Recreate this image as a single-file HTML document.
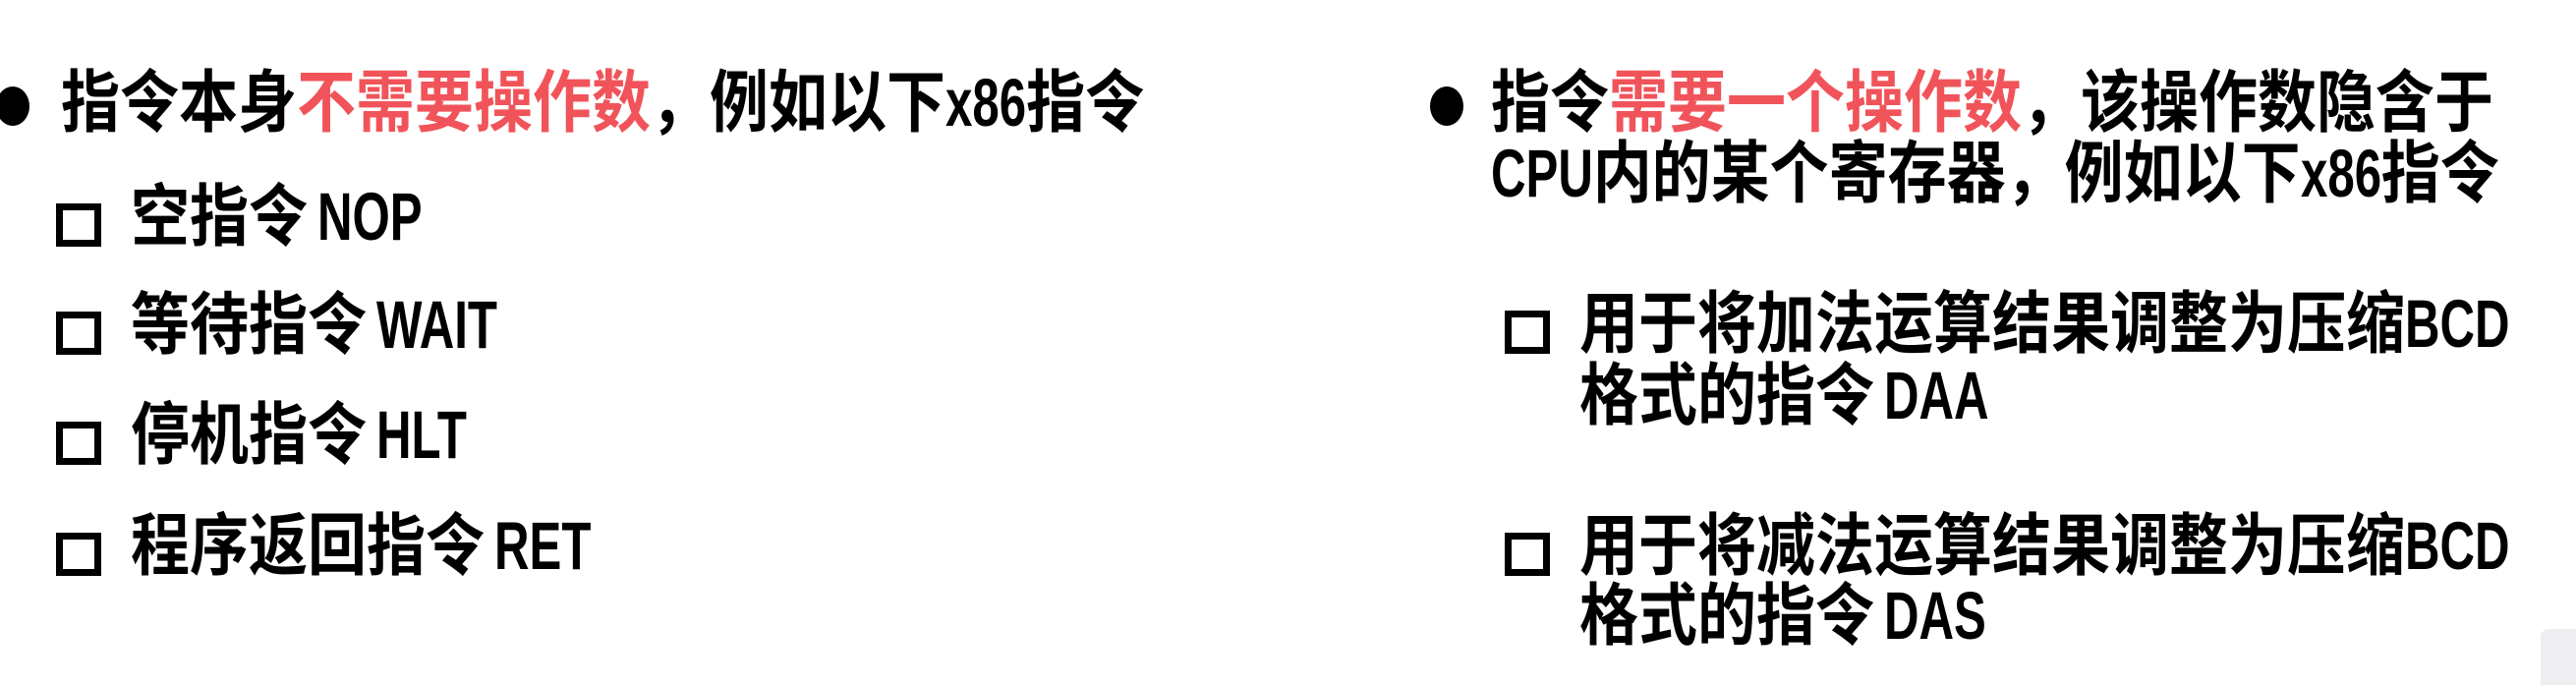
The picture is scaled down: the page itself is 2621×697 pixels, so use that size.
<!DOCTYPE html>
<html><head><meta charset="utf-8"><style>
html,body{margin:0;padding:0;background:#fff;}
body{width:2621px;height:697px;position:relative;overflow:hidden;}
.t{position:absolute;white-space:nowrap;font-family:"Liberation Sans","Noto Sans CJK SC",sans-serif;font-weight:bold;font-size:60px;line-height:72px;color:#000;transform:scaleY(1.15);transform-origin:0 62px;}
.r{color:#f0545a;}
.l{display:inline-block;transform:scaleX(.82);transform-origin:0 0;}
.dot{position:absolute;width:34px;height:40px;border-radius:50%;background:#000;}
.box{position:absolute;width:32px;height:30px;border:7px solid #000;box-sizing:content-box;}
</style></head><body>
<div class="dot" style="left:-4px;top:88px;"></div>
<div class="t" style="left:62px;top:73px;">指令本身<span class="r">不需要操作数</span>，例如以下<span class="l" style="margin-right:-18px">x86</span>指令</div>

<div class="box" style="left:57px;top:207px;"></div>
<div class="t" style="left:133px;top:189px;">空指令<span class="l" style="margin-left:10px;margin-right:-23px">NOP</span></div>
<div class="box" style="left:57px;top:317px;"></div>
<div class="t" style="left:133px;top:299px;">等待指令<span class="l" style="margin-left:10px;margin-right:-27px">WAIT</span></div>
<div class="box" style="left:57px;top:429px;"></div>
<div class="t" style="left:133px;top:411px;">停机指令<span class="l" style="margin-left:10px;margin-right:-21px">HLT</span></div>
<div class="box" style="left:57px;top:542px;"></div>
<div class="t" style="left:133px;top:524px;">程序返回指令<span class="l" style="margin-left:10px;margin-right:-22px">RET</span></div>

<div class="dot" style="left:1455px;top:88px;"></div>
<div class="t" style="left:1517px;top:73px;">指令<span class="r">需要一个操作数</span>，该操作数隐含于</div>
<div class="t" style="left:1517px;top:145px;"><span class="l" style="margin-right:-23px">CPU</span>内的某个寄存器，例如以下<span class="l" style="margin-right:-18px">x86</span>指令</div>

<div class="box" style="left:1531px;top:316px;"></div>
<div class="t" style="left:1607px;top:298px;">用于将加法运算结果调整为压缩<span class="l" style="margin-right:-23px">BCD</span></div>
<div class="t" style="left:1607px;top:371px;">格式的指令<span class="l" style="margin-left:10px;margin-right:-23px">DAA</span></div>
<div class="box" style="left:1531px;top:542px;"></div>
<div class="t" style="left:1607px;top:524px;">用于将减法运算结果调整为压缩<span class="l" style="margin-right:-23px">BCD</span></div>
<div class="t" style="left:1607px;top:595px;">格式的指令<span class="l" style="margin-left:10px;margin-right:-23px">DAS</span></div>

<div style="position:absolute;left:2585px;top:640px;width:36px;height:57px;background:#eeeef0;border-radius:8px 0 0 0;"></div>
</body></html>
